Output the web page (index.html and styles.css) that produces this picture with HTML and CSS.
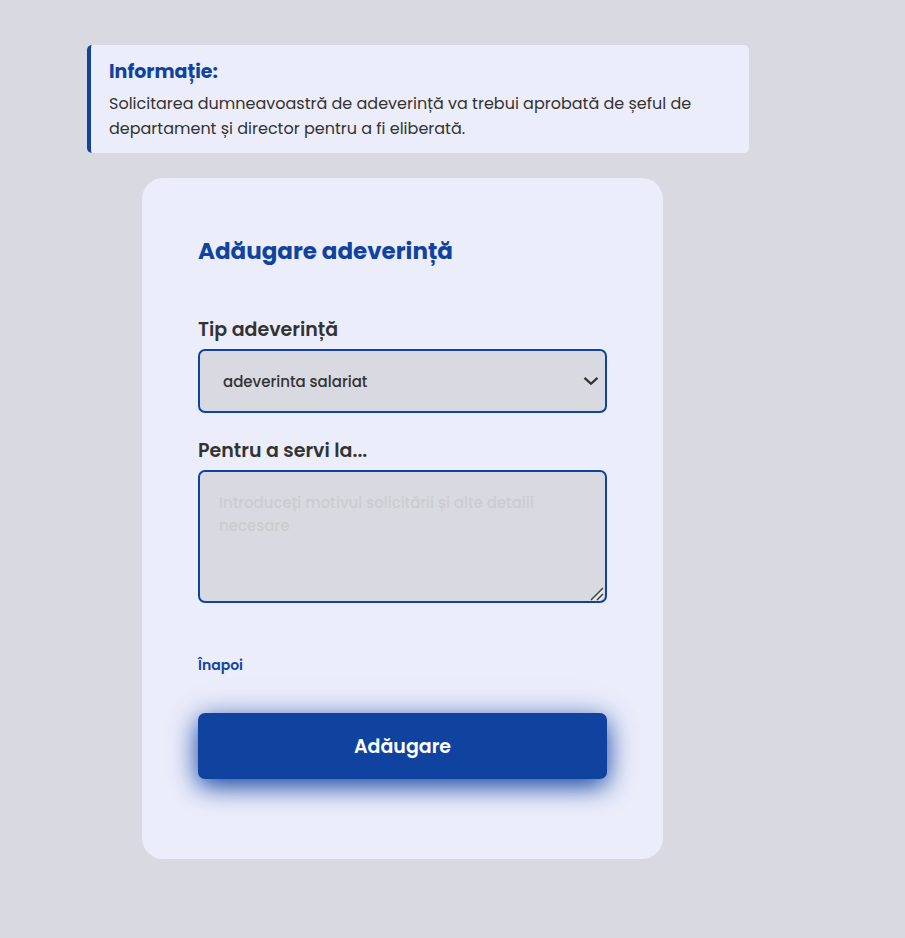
FILE: index.html
```html
<!DOCTYPE html>
<html lang="ro">
<head>
<meta charset="utf-8">
<meta name="viewport" content="width=device-width, initial-scale=1">
<title>Adăugare adeverință</title>
<link rel="stylesheet" href="styles.css">
</head>
<body>
<main class="page">
  <aside class="notice">
    <h2 class="notice-title">Informație:</h2>
    <p class="notice-text">Solicitarea dumneavoastră de adeverință va trebui aprobată de șeful de departament și director pentru a fi eliberată.</p>
  </aside>
  <form class="card">
    <h1 class="card-title">Adăugare adeverință</h1>
    <div class="field">
      <label class="label" for="type">Tip adeverință</label>
      <div class="control-wrap">
        <select class="control select" id="type">
          <option>adeverinta salariat</option>
        </select>
        <svg class="chevron" width="16" height="10" viewBox="0 0 16 10" aria-hidden="true">
          <path d="M1.500 1.800 L8 7.800 L14.500 1.800" fill="none" stroke="#333" stroke-width="2.300"/>
        </svg>
      </div>
    </div>
    <div class="field">
      <label class="label" for="reason">Pentru a servi la...</label>
      <div class="control-wrap">
        <textarea class="control textarea" id="reason" placeholder="Introduceți motivul solicitării și alte detalii necesare"></textarea>
        <svg class="grip" width="14" height="14" viewBox="0 0 14 14" aria-hidden="true">
          <path d="M3 13.5 L13.5 3 M9 13.5 L13.5 9" fill="none" stroke="#eee" stroke-width="1.5"/>
          <path d="M1 13 L13 1 M7 13 L13 7" fill="none" stroke="#444" stroke-width="1.5"/>
        </svg>
      </div>
    </div>
    <a class="back" href="#">Înapoi</a>
    <button class="submit" type="submit">Adăugare</button>
  </form>
</main>
</body>
</html>
```
FILE: styles.css
```css
:root {
  --blue: #1043a0;
  --surface: #ebedfa;
  --base: #d9d9e1;
  --ink: #333333;
}

* {
  box-sizing: border-box;
}

body {
  margin: 0;
  background: var(--base);
  color: var(--ink);
  font-family: Poppins, Inter, sans-serif;
}

.page {
  max-width: 750px;
  margin-left: 87px;
  padding: 45px 88px 79px 0;
}

.notice {
  padding: 12px 18px;
  border-left: 4px solid var(--blue);
  border-radius: 5px;
  background: var(--surface);
}

.notice-title {
  margin: 0 0 4px;
  color: var(--blue);
  font-size: 19px;
  font-weight: 700;
  line-height: 30px;
}

.notice-text {
  margin: 0;
  font-size: 16px;
  line-height: 25px;
}

.card {
  display: flex;
  flex-direction: column;
  max-width: 521px;
  margin: 25px 0 0 55px;
  padding: 55px 56px 80px;
  border-radius: 21px;
  background: var(--surface);
}

.card-title {
  margin: 0 0 46px;
  color: var(--blue);
  font-size: 23px;
  font-weight: 700;
  line-height: 36px;
}

.field {
  display: flex;
  flex-direction: column;
  margin-bottom: 23px;
}

.label {
  margin-bottom: 4px;
  font-size: 19px;
  font-weight: 600;
  line-height: 30px;
}

.control-wrap {
  position: relative;
}

.control {
  display: block;
  width: 100%;
  border: 2px solid var(--blue);
  border-radius: 7px;
  background-color: var(--base);
  color: var(--ink);
  font-family: inherit;
  font-size: 15px;
  font-weight: 500;
}

.select {
  height: 64px;
  padding: 0 23px;
  appearance: none;
}

.chevron {
  position: absolute;
  top: 27px;
  right: 8px;
  pointer-events: none;
}

.textarea {
  height: 133px;
  padding: 19px;
  line-height: 23px;
  resize: vertical;
}

.textarea::-webkit-resizer {
  background: transparent;
}

.textarea::placeholder {
  color: #cccccf;
}

.grip {
  position: absolute;
  right: 3px;
  bottom: 2px;
  pointer-events: none;
}

.back {
  align-self: flex-start;
  margin: 29px 0 37px;
  color: var(--blue);
  font-size: 14px;
  font-weight: 600;
  line-height: 21px;
  text-decoration: none;
}

.submit {
  height: 66px;
  border: 0;
  border-radius: 7px;
  background: var(--blue);
  box-shadow: 0 7px 26px var(--blue), 0 0 40px rgba(130, 130, 230, 0.1);
  color: #ffffff;
  font-family: inherit;
  font-size: 19px;
  font-weight: 600;
}
```
